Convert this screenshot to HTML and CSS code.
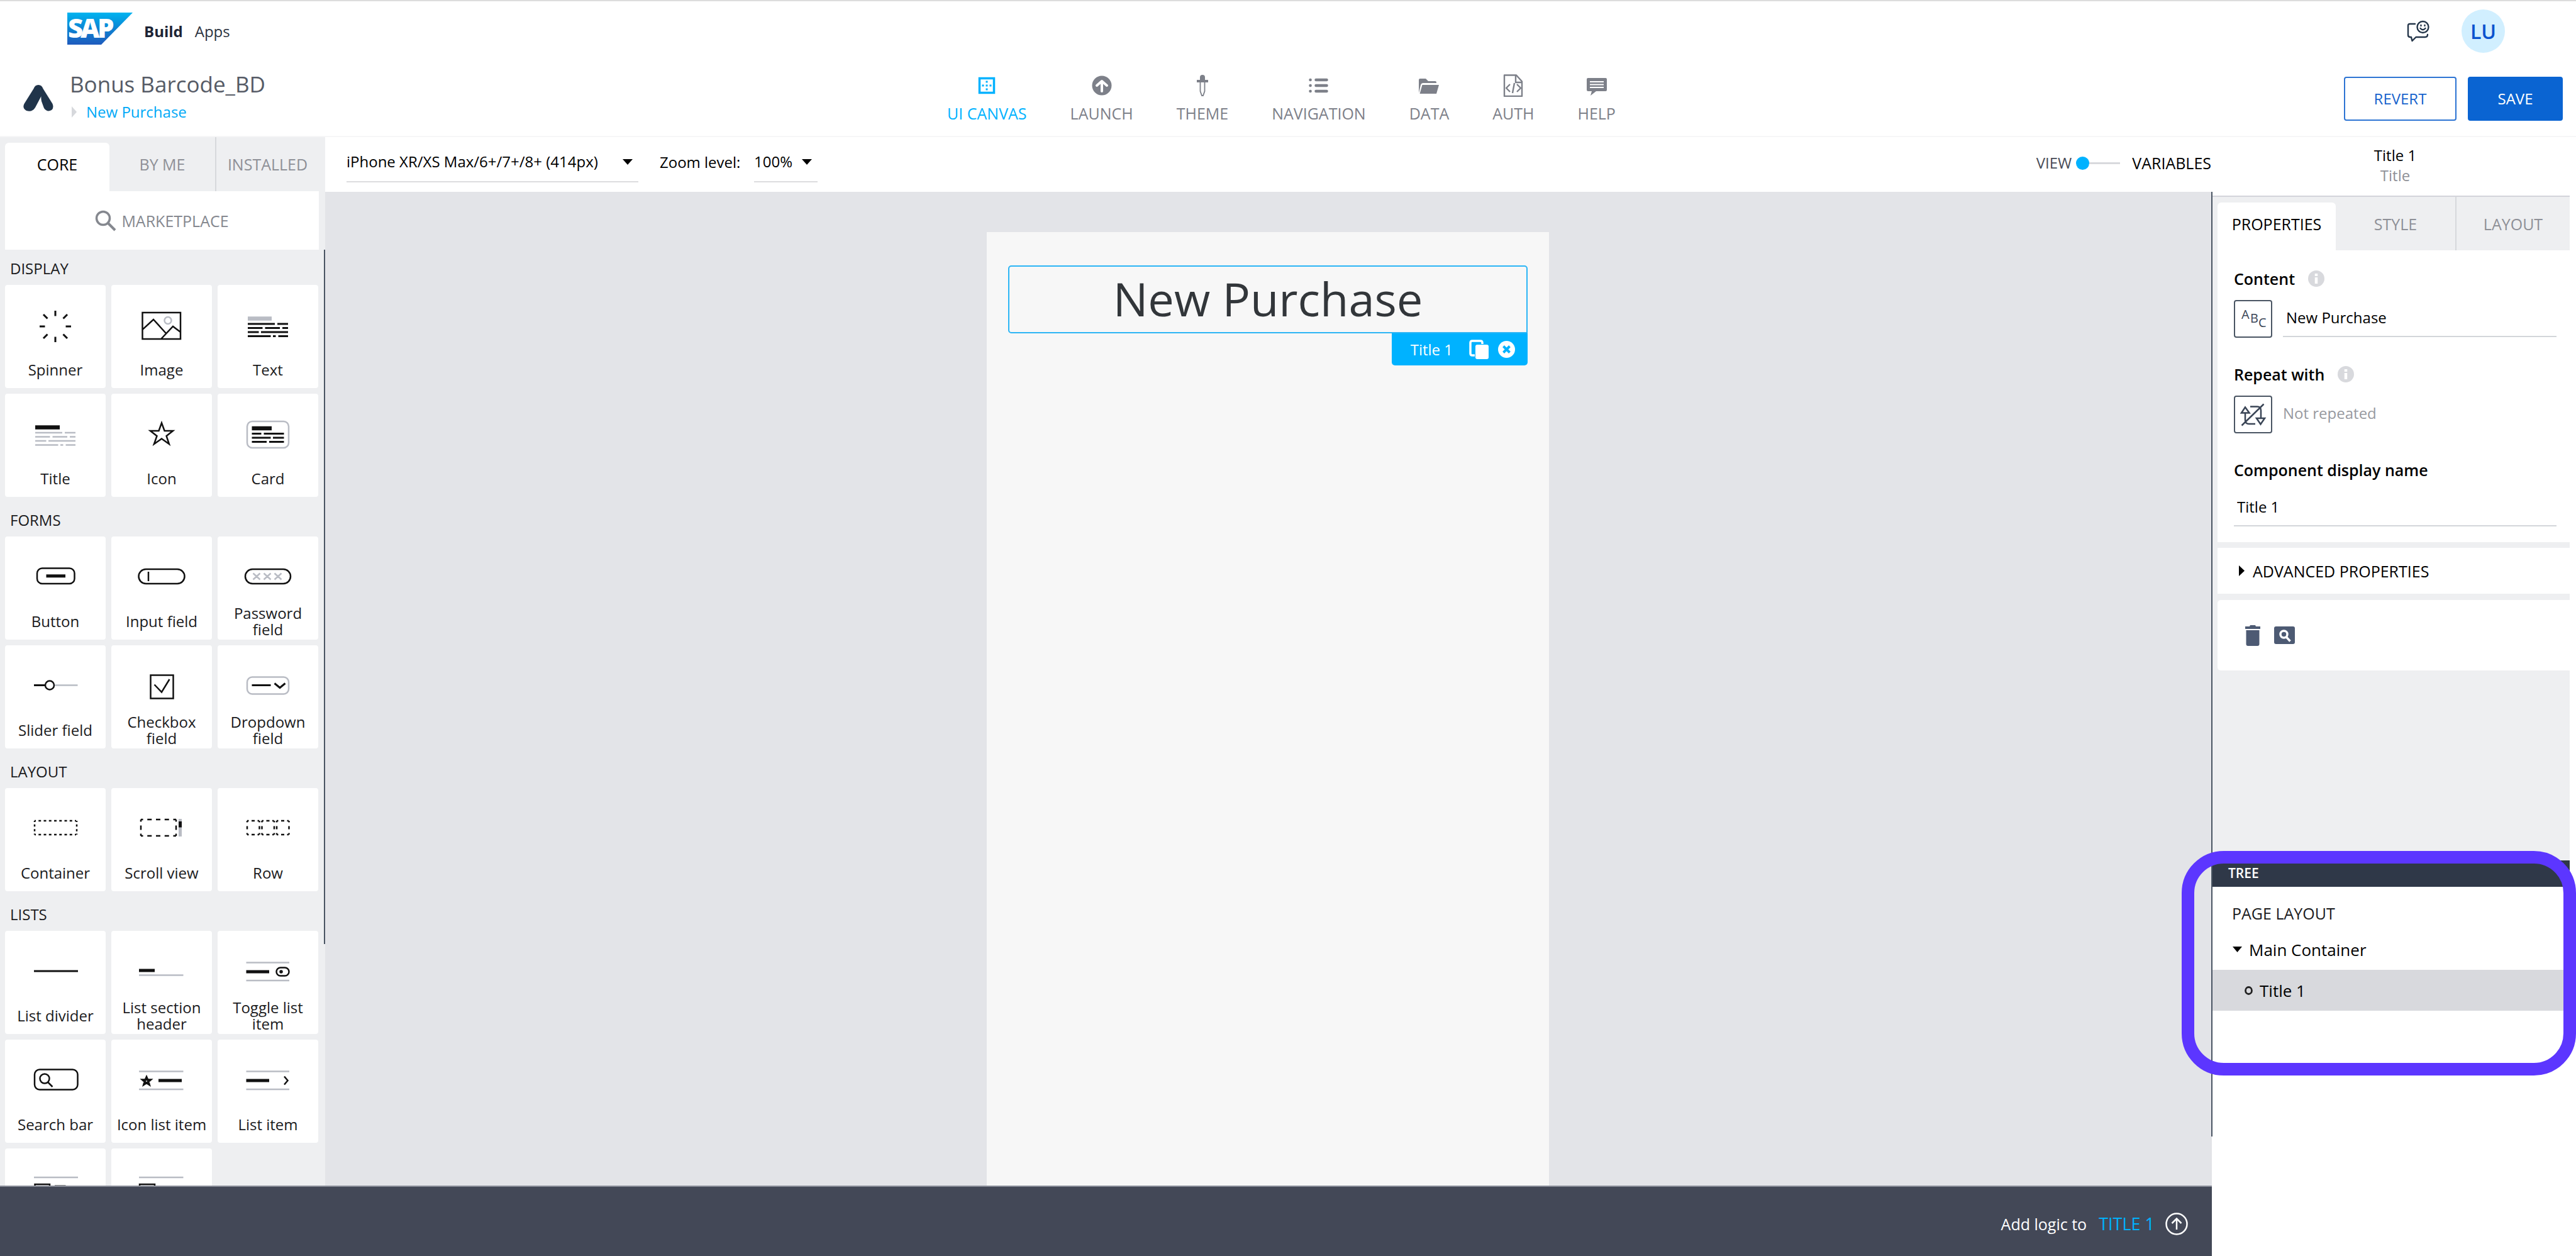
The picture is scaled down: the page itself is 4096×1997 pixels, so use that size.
FILE: index.html
```html
<!DOCTYPE html>
<html lang="en">
<head>
<meta charset="utf-8">
<title>Bonus Barcode_BD - Build Apps</title>
<link rel="stylesheet" href="styles.css">
</head>
<body>
<header class="shell">
  <svg class="sap-logo" viewBox="0 0 104 51" role="img" aria-label="SAP">
    <defs><linearGradient id="sap" x1="0" y1="0" x2="0" y2="1"><stop offset="0" stop-color="#00b4f0"/><stop offset=".55" stop-color="#0f7fd0"/><stop offset="1" stop-color="#1f5bbd"/></linearGradient></defs>
    <path fill="url(#sap)" d="M0 0h104L54 51H0z"/>
    <text class="sap-text" y="40"><tspan x="1">S</tspan><tspan x="21">A</tspan><tspan x="48">P</tspan></text>
  </svg>
  <strong class="product">Build</strong>
  <span class="product-area">Apps</span>
  <div class="shell-user">
    <button class="plain" aria-label="Feedback"><svg width="36" height="36" viewBox="0 0 36 36" fill="none" stroke="#25364a" stroke-width="2.4" stroke-linecap="round" stroke-linejoin="round"><path d="M13 6H5Q2 6 2 9v14.500q0 3.500 3.500 3.500H7l1.500 6 6-6H29q4 0 4-4"/><circle cx="25.500" cy="11" r="9"/><path d="M21.500 13q4 4.500 8 0"/><path d="M22.500 8v1M28.500 8v1"/></svg></button>
    <button class="avatar">LU</button>
  </div>
</header>

<header class="appbar">
  <div class="project">
    <svg width="48" height="42" viewBox="0 0 48 42" fill="#20344a"><path d="M16.500 6Q18.500 0 24 0T31.500 6L46.500 30Q49 37 45 40Q38 44 33 37L29 26Q28 21 28.500 18L19 36Q14 44 5 41Q-2 37 1.500 30z"/></svg>
    <div>
      <h1 class="project-name">Bonus Barcode_BD</h1>
      <a class="page-link" href="#page"><svg width="8" height="18" viewBox="0 0 8 18" fill="#d6d8dc"><path d="M0 0l8 9-8 9z"/></svg>New Purchase</a>
    </div>
  </div>
  <nav class="main-nav">
    <a href="#canvas" class="nav-item current"><svg viewBox="0 0 36 36"><path fill="none" stroke="currentColor" stroke-width="3.500" d="M6.500 6.500h23v23h-23z"/><path fill="currentColor" d="M16.500 10.500h3v3h-3zM16.500 16.500h3v3h-3zM16.500 22.500h3v3h-3zM10.500 16.500h3v3h-3zM22.500 16.500h3v3h-3z"/></svg>UI CANVAS</a>
    <a href="#launch" class="nav-item"><svg viewBox="0 0 36 36"><circle cx="18" cy="18" r="15.500" fill="currentColor"/><path d="M18 27V12M10 18l8-7 8 7" fill="none" stroke="#fff" stroke-width="4" stroke-linecap="round" stroke-linejoin="round"/></svg>LAUNCH</a>
    <a href="#theme" class="nav-item"><svg viewBox="0 0 36 36"><path fill="currentColor" d="M14 9V5q0-4 4-4t4 4v4h5v4H9V9z"/><path d="M14.500 13v14l2.500 7h2l2.500-7V13" fill="none" stroke="currentColor" stroke-width="1.800"/></svg>THEME</a>
    <a href="#navigation" class="nav-item"><svg viewBox="0 0 36 36"><g stroke="currentColor" stroke-width="4.500" stroke-linecap="round"><path d="M13.500 9h17M13.500 18h17M13.500 27h17"/><path d="M4.500 9h.1M4.500 18h.1M4.500 27h.1"/></g></svg>NAVIGATION</a>
    <a href="#data" class="nav-item"><svg viewBox="0 0 36 36" fill="currentColor"><path d="M2 30V9q0-2 2-2h9l4 4h11q2 0 2 2v1H9q-3 0-4 3z"/><path d="M7.500 17H34l-4 14H3.500z"/></svg>DATA</a>
    <a href="#auth" class="nav-item"><svg viewBox="0 0 36 36" fill="none" stroke="currentColor" stroke-width="2.400" stroke-linejoin="round"><path d="M4 1.500h19l9 10V35H4z"/><path d="M22 2v11h10M13 16l-6 6 6 6M24 16l6 6-6 6M20 14l-3 16"/></svg>AUTH</a>
    <a href="#help" class="nav-item"><svg viewBox="0 0 36 36"><path fill="currentColor" d="M4 6h28q2 0 2 2v17q0 2-2 2H17l-9 7 2-7H4q-2 0-2-2V8q0-2 2-2z"/><path d="M7 12h22M7 16.500h22M7 21h22" stroke="#fff" stroke-width="2"/></svg>HELP</a>
  </nav>
  <div class="actions">
    <button class="btn">REVERT</button>
    <button class="btn btn-primary">SAVE</button>
  </div>
</header>

<main class="studio">
  <div class="builder">
    <div class="workspace">
      <aside class="library">
        <div class="tabs library-tabs">
          <button class="tab active">CORE</button>
          <button class="tab">BY ME</button>
          <button class="tab divided">INSTALLED</button>
        </div>
        <button class="marketplace"><svg width="34" height="34" viewBox="0 0 34 34" fill="none" stroke="#85888f" stroke-width="3.500"><circle cx="13" cy="13" r="10.500"/><path d="M20.500 20.500L32 32" stroke-width="4"/></svg>MARKETPLACE</button>
        <div class="catalog">
          <h2 class="group-name">DISPLAY</h2>
          <div class="cards">
            <button class="card"><svg viewBox="0 0 84 84" class="k"><path stroke-width="3" d="M42 17v8.500M42 58.500V67M17 42h8.500M58.500 42H67M23 23l6.500 6.500M54.500 54.500L61 61M61 23l-6.500 6.500M29.500 54.500L23 61"/></svg><span>Spinner</span></button>
            <button class="card"><svg viewBox="0 0 84 84" class="k"><path d="M11.500 20h60.500v42H11.500zM12 46.600L29 31l20 22M41 62l19-20 12 9"/><circle cx="52" cy="32.500" r="5.500" class="g"/></svg><span>Image</span></button>
            <button class="card"><svg viewBox="0 0 84 84" class="k"><path class="g" stroke-width="6.500" d="M10 29.500h38"/><path stroke-width="3" d="M10 38h43M57 38h17M10 44.500h23.500M37.500 44.500H61M65 44.500h9M10 51h17.500M31 51h43M10 57.500h36.500M50 57.500h4.500M58.500 57.500H74"/></svg><span>Text</span></button>
            <button class="card"><svg viewBox="0 0 84 84" class="k"><path stroke-width="6.500" d="M10 29.500h39"/><path class="g" d="M10 38h43M57 38h17M10 44.500h23.500M37.500 44.500H61M65 44.500h9M10 51h17.500M31 51h43M10 57.500h36.500M50 57.500h4.500M58.500 57.500H74"/></svg><span>Title</span></button>
            <button class="card"><svg viewBox="0 0 84 84" class="k"><path d="M42 22.500l4.600 12.500H60L49.600 43.200l4.300 12.800L42 47.500 30 56l4.500-12.800L24 35h13.500z"/></svg><span>Icon</span></button>
            <button class="card"><svg viewBox="0 0 84 84" class="k"><rect class="g" x="9" y="20" width="66" height="42" rx="8"/><path stroke-width="6.500" d="M16.500 31H48"/><path stroke-width="3" d="M16.500 39.500h15M35.500 39.500h32M16.500 46h30M50 46h17.500M16.500 52.500H40M44 52.500h23.500"/></svg><span>Card</span></button>
          </div>
          <h2 class="group-name">FORMS</h2>
          <div class="cards">
            <button class="card"><svg viewBox="0 0 84 84" class="k"><rect x="13" y="26.500" width="59.500" height="24.500" rx="8"/><path stroke-width="5" d="M27.500 38.800H58"/></svg><span>Button</span></button>
            <button class="card"><svg viewBox="0 0 84 84" class="k"><rect x="5.500" y="28" width="73" height="23" rx="11.500"/><path d="M21 32v15"/></svg><span>Input field</span></button>
            <button class="card"><svg viewBox="0 0 84 84" class="k"><rect x="6" y="28" width="72" height="23" rx="11.500"/><path class="g" d="M18.500 34.500l11 10M29.500 34.500l-11 10M35.500 34.500l11 10M46.500 34.500l-11 10M52.500 34.500l11 10M63.500 34.500l-11 10"/></svg><span>Password field</span></button>
            <button class="card"><svg viewBox="0 0 84 84" class="k"><path d="M8 39.500h18" stroke-width="3"/><circle cx="33" cy="39.500" r="7"/><path class="g" d="M41 39.500h36.500"/></svg><span>Slider field</span></button>
            <button class="card"><svg viewBox="0 0 84 84" class="k"><path d="M24.500 23.500h36v37h-36zM30.500 38.500l11.500 12 12.500-20.500"/></svg><span>Checkbox field</span></button>
            <button class="card"><svg viewBox="0 0 84 84" class="k"><rect class="g" x="9" y="26.500" width="66" height="27" rx="8"/><path d="M16.500 39.500h30M52.500 36.500l8.500 7 8.500-7" stroke-width="3"/></svg><span>Dropdown field</span></button>
          </div>
          <h2 class="group-name">LAYOUT</h2>
          <div class="cards">
            <button class="card"><svg viewBox="0 0 84 84" class="k"><path stroke-dasharray="4 4.250" stroke-dashoffset="2" d="M9 28h66M9 50h66"/><path stroke-dasharray="3.500 3.830" stroke-dashoffset="1.500" d="M9 28v22M76 28v22"/></svg><span>Container</span></button>
            <button class="card"><svg viewBox="0 0 84 84" class="k"><path stroke-dasharray="7 6.750" stroke-dashoffset="3.500" d="M9 26h56M9 52h56"/><path stroke-dasharray="7 6" stroke-dashoffset="3.500" d="M9 26v26M65 26v26"/><path class="g" stroke-width="5" d="M71.500 25v28"/><path stroke-width="5" d="M71.500 29v9.500"/></svg><span>Scroll view</span></button>
            <button class="card"><svg viewBox="0 0 84 84" class="k"><path stroke-dasharray="5 4.500" stroke-dashoffset="2.500" d="M9 28h19M32.500 28h19M56 28h19M9 50h19M32.500 50h19M56 50h19"/><path stroke-dasharray="5 6" stroke-dashoffset="2.500" d="M9 28v22M28.500 28v22M32.500 28v22M52 28v22M56 28v22M75.500 28v22"/></svg><span>Row</span></button>
          </div>
          <h2 class="group-name">LISTS</h2>
          <div class="cards">
            <button class="card"><svg viewBox="0 0 84 84" class="k"><path stroke-width="3" d="M8 40h70"/></svg><span>List divider</span></button>
            <button class="card"><svg viewBox="0 0 84 84" class="k"><path stroke-width="5" d="M6 39h25"/><path class="g" d="M6 46.500h70.500"/></svg><span>List section header</span></button>
            <button class="card"><svg viewBox="0 0 84 84" class="k"><path class="g" d="M7.500 26.500H76M7.500 55H76"/><path stroke-width="5" d="M7.500 41H44"/><rect x="55.500" y="34.500" width="20" height="13" rx="6.500"/><circle cx="63" cy="41" r="1.500"/></svg><span>Toggle list item</span></button>
            <button class="card"><svg viewBox="0 0 84 84" class="k"><rect x="9" y="23.500" width="68.500" height="32" rx="8"/><circle cx="25" cy="38" r="7.500"/><path d="M30 43.500l7.500 7.500"/></svg><span>Search bar</span></button>
            <button class="card"><svg viewBox="0 0 84 84" class="k"><path class="g" d="M6 26.500h70.500M6 55h70.500"/><path stroke-width="5" d="M37 41h37"/><path stroke-width="3.500" d="M18 36l1.800 4h4.200l-3.200 2.800 1.200 4.200-4-2.500-4 2.500 1.200-4.200L12 40h4.200z"/></svg><span>Icon list item</span></button>
            <button class="card"><svg viewBox="0 0 84 84" class="k"><path class="g" d="M7.500 26.500H76M7.500 55H76"/><path stroke-width="5" d="M7.500 41H44"/><path d="M68 34.500l5.500 6.500-5.500 6.500"/></svg><span>List item</span></button>
            <button class="card" aria-label="Large image list item"><svg viewBox="0 0 84 84" class="k"><path class="g" d="M8 22h70M8 60h70"/><path d="M9.500 33H33v18H9.500z"/><path class="g" d="M15.500 34v16"/><path stroke-width="5" d="M41 37h17.500"/></svg></button>
            <button class="card" aria-label="Image list item"><svg viewBox="0 0 84 84" class="k"><path class="g" d="M6 22h70.500M6 60h70.500"/><path d="M7 33h24v18H7z"/><path class="g" d="M13 34v16"/><path stroke-width="5" d="M38 43h36"/></svg></button>
          </div>
        </div>
      </aside>

      <section class="stage">
        <div class="stage-bar">
          <span class="picker picker-device">
            <select aria-label="Device"><option>iPhone XR/XS Max/6+/7+/8+ (414px)</option></select>
            <svg width="16" height="9" viewBox="0 0 16 9"><path d="M0 0h16L8 9z"/></svg>
          </span>
          <label class="zoom-label" for="zoom">Zoom level:</label>
          <span class="picker picker-zoom">
            <select id="zoom"><option>100%</option></select>
            <svg width="16" height="9" viewBox="0 0 16 9"><path d="M0 0h16L8 9z"/></svg>
          </span>
          <div class="mode">
            <label for="mode" class="mode-view">VIEW</label>
            <input id="mode" type="range" min="0" max="1" value="0">
            <span class="mode-variables">VARIABLES</span>
          </div>
        </div>
        <div class="canvas">
          <div class="phone">
            <div class="title-component">New Purchase</div>
            <div class="component-bar">
              <span>Title 1</span>
              <button class="plain" aria-label="Duplicate"><svg width="32" height="32" viewBox="0 0 32 32"><path fill="none" stroke="#fff" stroke-width="3.500" d="M9 25H5q-3 0-3-3V5q0-3 3-3h13q3 0 3 3v2"/><rect x="10" y="8" width="21" height="23" rx="3" fill="#fff"/></svg></button>
              <button class="plain" aria-label="Remove"><svg width="27" height="27" viewBox="0 0 27 27"><circle cx="13.500" cy="13.500" r="13.500" fill="#fff"/><path d="M8.500 8.500l10 10M18.500 8.500l-10 10" stroke="#00b2ff" stroke-width="4"/></svg></button>
            </div>
          </div>
        </div>
      </section>
    </div>
    <footer class="logic-bar">
      <span>Add logic to</span>
      <a href="#logic">TITLE 1</a>
      <button class="plain" aria-label="Open logic"><svg width="36" height="36" viewBox="0 0 36 36" fill="none" stroke="#fff" stroke-width="2.500"><circle cx="18" cy="18" r="16.500"/><path d="M18 27V10M10.500 17L18 9.500l7.500 7.500"/></svg></button>
    </footer>
  </div>

  <aside class="inspector">
    <div class="inspector-head"><strong>Title 1</strong><span>Title</span></div>
    <div class="inspector-body">
      <div class="tabs inspector-tabs">
        <button class="tab active">PROPERTIES</button>
        <button class="tab">STYLE</button>
        <button class="tab divided">LAYOUT</button>
      </div>
      <div class="panel fields">
        <div class="field-name"><label for="content">Content</label><svg width="26" height="26" viewBox="0 0 26 26"><circle cx="13" cy="13" r="13" fill="#d8d9dd"/><path d="M13 11v10M13 5v4" stroke="#fff" stroke-width="4.500"/></svg></div>
        <div class="field-row">
          <button class="binding" aria-label="Text binding"><svg width="60" height="60" viewBox="0 0 60 60" class="abc"><text x="10" y="28">A</text><text x="24" y="34">B</text><text x="37" y="41">C</text></svg></button>
          <input id="content" class="line-input" type="text" value="New Purchase">
        </div>
        <div class="field-name"><span>Repeat with</span><svg width="26" height="26" viewBox="0 0 26 26"><circle cx="13" cy="13" r="13" fill="#d8d9dd"/><path d="M13 11v10M13 5v4" stroke="#fff" stroke-width="4.500"/></svg></div>
        <div class="field-row">
          <button class="binding" aria-label="Repeat binding"><svg width="60" height="60" viewBox="0 0 60 60" fill="none" stroke="#3a4556" stroke-width="2.500"><path d="M16 16.500l-6 9h12.500zM16 25.500V37q0 6 6 6h10M24 15.500h11q6 0 6 6V34M34 34h13l-6.500 9.500zM10.500 45.500l35-34"/></svg></button>
          <span class="not-repeated">Not repeated</span>
        </div>
        <div class="field-name"><label for="display-name">Component display name</label></div>
        <input id="display-name" class="line-input display-name" type="text" value="Title 1">
      </div>
      <button class="panel advanced"><svg width="9" height="17" viewBox="0 0 9 17"><path d="M0 0l9 8.500L0 17z"/></svg>ADVANCED PROPERTIES</button>
      <div class="panel tools">
        <button class="plain" aria-label="Delete"><svg width="24" height="33" viewBox="0 0 24 33" fill="#4d5a73"><path d="M0 2h7l1-2h8l1 2h7v4H0zM1.500 8h21v22q0 3-3 3h-15q-3 0-3-3z"/></svg></button>
        <button class="plain" aria-label="Inspect"><svg width="33" height="28" viewBox="0 0 33 28"><rect width="33" height="28" rx="3" fill="#4d5a73"/><circle cx="15.500" cy="12.500" r="5.500" fill="none" stroke="#fff" stroke-width="3.500"/><path d="M19.500 17l6 6.500" stroke="#fff" stroke-width="3.500"/></svg></button>
      </div>
    </div>
    <section class="tree">
      <h2 class="tree-title">TREE</h2>
      <h3 class="tree-group">PAGE LAYOUT</h3>
      <button class="tree-row"><svg width="15" height="9" viewBox="0 0 15 9"><path d="M0 0h15L7.500 9z"/></svg>Main Container</button>
      <button class="tree-row child"><svg width="13" height="14" viewBox="0 0 13 14"><ellipse cx="6.500" cy="7" rx="5" ry="5.500" fill="none" stroke="#222" stroke-width="2.800"/></svg>Title 1</button>
      <div class="highlight"></div>
    </section>
  </aside>
</main>
</body>
</html>
```
FILE: styles.css
```css
* { box-sizing: border-box; }

body {
  margin: 0;
  height: 100vh;
  display: flex;
  flex-direction: column;
  overflow: hidden;
  background: #fff;
  color: #000;
  font: 24px/32px "Open Sans", "Noto Sans", sans-serif;
}

h1, h2, h3 { margin: 0; font-weight: 400; }
a { text-decoration: none; }
svg { display: block; flex: none; }
button, input, select { font: inherit; color: inherit; margin: 0; border: 0; padding: 0; background: none; }
.plain { display: block; }

/* Top shell */
.shell {
  flex: none;
  display: flex;
  align-items: center;
  height: 97px;
  padding: 0 113px 0 107px;
  border-top: 2px solid #dcdcdc;
}
.sap-logo { width: 104px; height: 51px; margin-bottom: 8px; overflow: visible; }
.sap-text { font: 800 42px "Open Sans", sans-serif; fill: #fff; }
.product { margin-left: 18px; color: #1d2434; font-weight: 700; }
.product-area { margin-left: 19px; color: #2c3340; }
.shell-user { margin-left: auto; display: flex; align-items: center; gap: 51px; }
.avatar {
  width: 69px;
  height: 69px;
  border-radius: 50%;
  background: #d1efff;
  color: #0b53ce;
  font-size: 32px;
  font-weight: 600;
}

/* Application bar */
.appbar {
  flex: none;
  display: grid;
  grid-template-columns: 1fr auto 1fr;
  align-items: center;
  height: 121px;
  padding-right: 21px;
  border-bottom: 2px solid #f6f6f7;
}
.project { display: flex; align-items: center; gap: 26px; padding: 0 0 2px 37px; }
.project-name { font-size: 35px; line-height: 44px; color: #565b66; }
.page-link {
  display: flex;
  align-items: center;
  gap: 15px;
  padding-left: 3px;
  line-height: 44px;
  color: #00a9f7;
}
.main-nav { display: flex; gap: 69px; }
.nav-item {
  display: flex;
  flex-direction: column;
  align-items: center;
  gap: 10px;
  color: #7d8089;
  font-size: 25px;
}
.nav-item svg { width: 36px; height: 36px; }
.nav-item.current { color: #00b2ff; }
.actions { display: flex; justify-content: flex-end; gap: 18px; }
.btn {
  width: 179px;
  height: 70px;
  border: 2px solid #2d74d3;
  border-radius: 4px;
  color: #1763cd;
}
.btn-primary { width: 151px; border-color: #0a64d2; background: #0a64d2; color: #fff; }

/* Studio layout */
.studio { flex: 1; min-height: 0; display: grid; grid-template-columns: 1fr 579px; }
.builder { min-height: 0; min-width: 0; display: flex; flex-direction: column; }
.workspace { flex: 1; min-height: 0; display: grid; grid-template-columns: 517px 1fr; overflow: hidden; }

.tabs { display: grid; align-items: stretch; }
.tab { font-size: 25px; color: #8e9097; }
.tab.active {
  margin-top: 9px;
  padding-bottom: 9px;
  border-radius: 6px 6px 0 0;
  background: #fff;
  color: #000;
}
.tab.divided { border-left: 2px solid #d6d8dc; }

/* Component library */
.library { background: #eeeff1; min-height: 0; display: flex; flex-direction: column; }
.library-tabs { flex: none; height: 86px; padding: 0 10px 0 8px; grid-template-columns: 166px 168px 1fr; }
.marketplace {
  flex: none;
  display: flex;
  align-items: center;
  justify-content: center;
  gap: 8px;
  height: 93px;
  margin: 0 10px 0 8px;
  background: #fff;
  color: #85888f;
  font-size: 25px;
}
.catalog {
  flex: 1;
  min-height: 0;
  overflow: hidden;
  padding: 0 11px 0 8px;
  background: linear-gradient(#4a5563, #4a5563) top right / 2px 1104px no-repeat;
}
.group-name { padding: 21px 8px 10px; font-size: 24px; color: #1b1b1d; }
.group-name:first-child { padding-top: 14px; }
.cards { display: grid; grid-template-columns: repeat(3, 1fr); gap: 9px; }
.card {
  display: flex;
  flex-direction: column;
  align-items: center;
  height: 164px;
  padding: 24px 8px 0;
  border-radius: 4px;
  background: #fff;
  color: #1b1b1d;
  line-height: 26px;
}
.card svg { width: 84px; height: 84px; }
.card span { display: flex; align-items: center; height: 54px; }
.k { fill: none; stroke: #111; stroke-width: 2.500; }
.k .g { stroke: #b9bcc4; }

/* Stage */
.stage { min-width: 0; min-height: 0; display: flex; flex-direction: column; }
.stage-bar {
  flex: none;
  display: flex;
  align-items: flex-end;
  height: 87px;
  padding: 0 1px 15px 34px;
  background: #fff;
  line-height: 60px;
}
.picker { display: grid; align-items: center; height: 64px; border-bottom: 2px solid #dcdddf; }
.picker select { grid-area: 1 / 1; appearance: none; width: 100%; height: 60px; outline: 0; }
.picker svg { grid-area: 1 / 1; justify-self: end; margin-right: 9px; pointer-events: none; }
.picker-device { width: 464px; }
.picker-zoom { width: 101px; margin-left: 16px; }
.zoom-label { height: 62px; margin-left: 34px; width: 134px; }
.mode { margin-left: auto; display: flex; align-items: center; height: 62px; }
.mode-view { color: #474b57; }
.mode input { appearance: none; width: 70px; height: 22px; margin: 0 19px 0 7px; }
.mode input::-webkit-slider-runnable-track { height: 3px; background: #d8d9dd; }
.mode input::-webkit-slider-thumb {
  appearance: none;
  width: 21px;
  height: 21px;
  margin-top: -9px;
  border-radius: 50%;
  background: #00b2ff;
}
.mode-variables { font-size: 25px; }

.canvas { flex: 1; min-height: 0; display: flex; justify-content: center; padding: 64px 2px 0 0; background: #e3e4e8; }
.phone { display: flex; flex-direction: column; width: 894px; padding: 53px 34px 0; background: #f7f7f7; }
.title-component {
  height: 108px;
  border: 2px solid #2bb5f5;
  border-radius: 5px 5px 0 5px;
  color: #32363a;
  font-size: 74px;
  line-height: 102px;
  text-align: center;
}
.component-bar {
  align-self: flex-end;
  display: flex;
  align-items: center;
  height: 51px;
  padding: 0 20px 0 30px;
  border-radius: 0 0 5px 5px;
  background: #00b2ff;
  color: #fff;
}
.component-bar span { margin-right: 26px; }
.component-bar .plain + .plain { margin-left: 14px; }

.logic-bar {
  flex: none;
  display: flex;
  align-items: center;
  justify-content: flex-end;
  height: 112px;
  padding: 8px 38px 0 0;
  border-top: 2px solid #8c909b;
  background: #434857;
  color: #fff;
  font-size: 25px;
}
.logic-bar a { margin: 0 17px 0 19px; font-size: 27px; color: #00b2ff; }

/* Inspector */
.inspector {
  position: relative;
  min-height: 0;
  display: flex;
  flex-direction: column;
}
.inspector::before {
  content: "";
  position: absolute;
  z-index: 1;
  left: -1px;
  top: 87px;
  bottom: 190px;
  width: 2px;
  background: #4a5563;
}
.inspector-head {
  flex: none;
  display: flex;
  flex-direction: column;
  align-items: center;
  height: 95px;
  margin-right: 10px;
  padding: 13px 0 0 14px;
  border-bottom: 2px solid #d3d4da;
}
.inspector-head strong { font-weight: 400; }
.inspector-head span { color: #8e8f96; }
.inspector-body {
  flex: 1;
  min-height: 0;
  margin-right: 10px;
  padding-left: 9px;
  background: #eeeff1;
}
.inspector-tabs { height: 85px; grid-template-columns: 188px 190px 1fr; }
.panel { background: #fff; }
.fields { padding: 29px 21px 25px 26px; }
.field-name { display: flex; align-items: center; gap: 21px; margin-bottom: 18px; font-size: 25px; font-weight: 600; }
.field-row { display: flex; align-items: center; gap: 17px; margin-bottom: 42px; }
.binding { width: 61px; height: 60px; border: 2px solid #4a5563; border-radius: 4px; overflow: hidden; }
.abc { font: 20px "Open Sans", sans-serif; fill: #3a4556; }
.line-input {
  flex: 1;
  height: 58px;
  padding: 0 0 4px 5px;
  border-bottom: 2px solid #d3d6da;
  outline: 0;
}
.not-repeated { margin-bottom: 5px; color: #9799a0; }
.display-name { display: block; width: 100%; margin-top: -6px; height: 62px; padding: 0 0 0 5px; }
.advanced {
  display: flex;
  align-items: center;
  gap: 13px;
  width: 100%;
  height: 73px;
  margin: 9px 0 10px;
  padding-left: 34px;
  font-size: 25px;
}
.tools { display: flex; align-items: center; gap: 22px; height: 112px; padding-left: 44px; border-radius: 5px 0 0 5px; }

/* Component tree */
.tree { position: relative; flex: 0 0 629px; padding-right: 10px; background: #fff; }
.tree-title {
  height: 42px;
  padding-left: 26px;
  background: #2f3848;
  color: #fff;
  font-size: 21px;
  font-weight: 600;
  line-height: 41px;
}
.tree-group { padding: 26px 0 9px 32px; font-size: 25px; color: #1b1b1d; }
.tree-row {
  display: flex;
  align-items: center;
  gap: 11px;
  width: 100%;
  height: 65px;
  padding-left: 33px;
  font-size: 26px;
}
.tree-row.child { padding-left: 52px; background: #d8d9dd; }
.highlight {
  position: absolute;
  z-index: 2;
  left: -48px;
  right: 0;
  top: -15px;
  height: 357px;
  border: 20px solid #5c36ff;
  border-radius: 67px;
  pointer-events: none;
}
```
